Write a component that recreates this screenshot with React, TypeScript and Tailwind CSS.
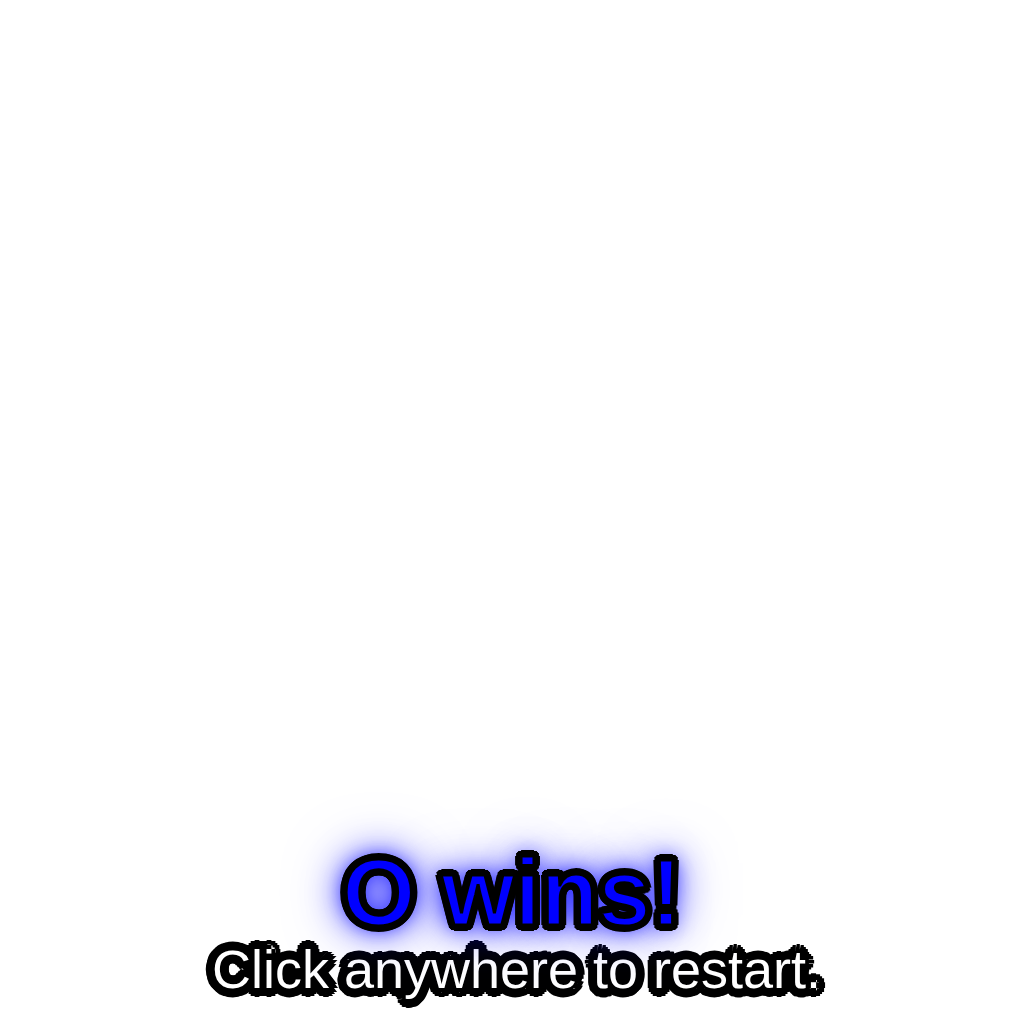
export default function App() {
    return (
        <div className="flex h-screen w-full flex-col items-center justify-end overflow-hidden bg-white pb-[26px] font-['Liberation_Sans',Arial,sans-serif]">
            {/* 승리 메시지 */}
            <h1 className="relative z-10 mb-[7px] text-[94px] font-bold leading-[80px] text-[#0000ff] [-webkit-text-stroke:3px_#000] [text-shadow:6px_0_0_#000,5px_3px_0_#000,4px_4px_0_#000,3px_5px_0_#000,0_6px_0_#000,-3px_5px_0_#000,-4px_4px_0_#000,-5px_3px_0_#000,-6px_0_0_#000,-5px_-3px_0_#000,-4px_-4px_0_#000,-3px_-5px_0_#000,0_-6px_0_#000,3px_-5px_0_#000,4px_-4px_0_#000,5px_-3px_0_#000,0_0_20px_#0000ff,0_0_36px_#0000ff,0_0_60px_rgba(0,0,255,0.6)]">
                O wins!
            </h1>
            {/* 재시작 안내 */}
            <p className="pl-[9px] text-[54px] leading-[58px] text-white [text-shadow:9px_0_0_#000,8px_4px_0_#000,6px_6px_0_#000,4px_8px_0_#000,0_9px_0_#000,-4px_8px_0_#000,-6px_6px_0_#000,-8px_4px_0_#000,-9px_0_0_#000,-8px_-4px_0_#000,-6px_-6px_0_#000,-4px_-8px_0_#000,0_-9px_0_#000,4px_-8px_0_#000,6px_-6px_0_#000,8px_-4px_0_#000,4px_0_0_#000,0_4px_0_#000,-4px_0_0_#000,0_-4px_0_#000,0_0_3px_#000]">
                Click anywhere to restart.
            </p>
        </div>
    );
}
